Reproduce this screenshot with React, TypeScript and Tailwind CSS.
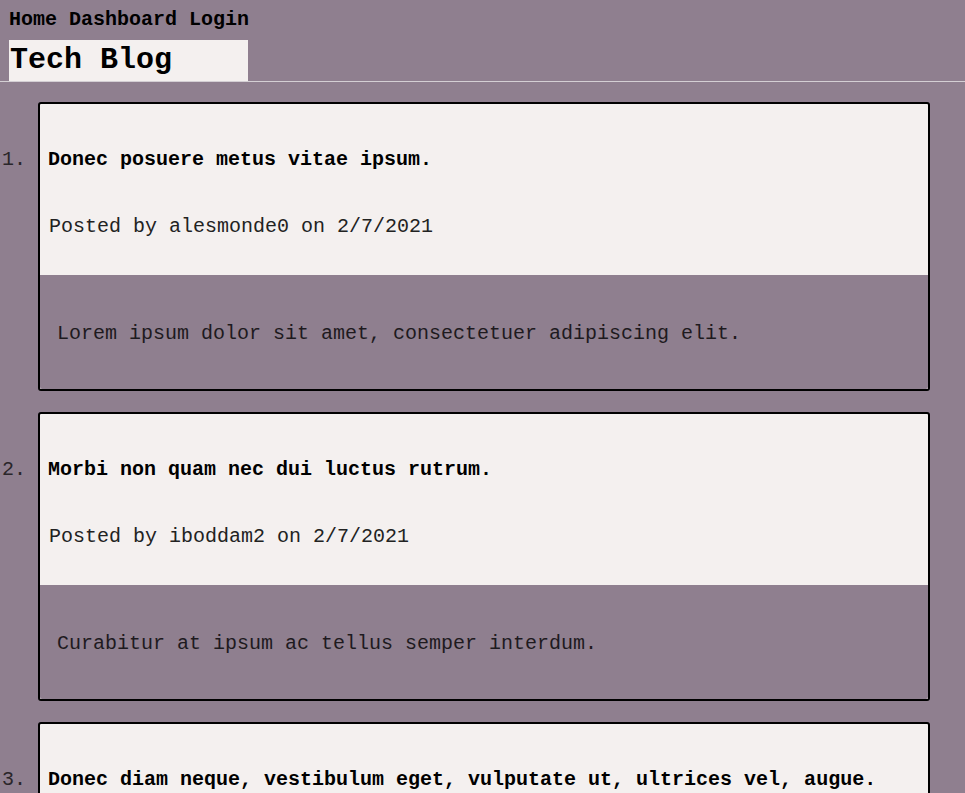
import React from 'react';

const posts = [
  {
    title: "Donec posuere metus vitae ipsum.",
    author: "alesmonde0",
    date: "2/7/2021",
    body: "Lorem ipsum dolor sit amet, consectetuer adipiscing elit."
  },
  {
    title: "Morbi non quam nec dui luctus rutrum.",
    author: "iboddam2",
    date: "2/7/2021",
    body: "Curabitur at ipsum ac tellus semper interdum."
  },
  {
    title: "Donec diam neque, vestibulum eget, vulputate ut, ultrices vel, augue.",
    author: "alesmonde0",
    date: "2/7/2021",
    body: "Nullam porttitor lacus at turpis."
  }
];

const App: React.FC = () => {
  return (
    <div className="min-h-screen bg-[#8f7f8f] font-['Liberation_Mono','Courier_New',monospace] text-[#111]">
      {/* Header */}
      <header className="border-b border-[#d4cfd4] pt-2">
        <nav className="px-[9px] text-[20px] leading-[23px] font-bold text-black">
          <a href="#">Home</a> <a href="#">Dashboard</a> <a href="#">Login</a>
        </nav>
        <div className="mt-[9px] ml-[9px] w-[239px] h-[41px] bg-[#f4f0ef]">
          <h1 className="px-[1px] pt-[1px] text-[30px] leading-[39px] font-bold text-black">Tech Blog</h1>
        </div>
      </header>

      {/* Posts */}
      <ol className="list-decimal list-outside pl-[38px] pr-[35px] pt-5 text-[20px] text-[#333] marker:text-[#2a262a]">
        {posts.map((post, index) => (
          <li key={index} className="mb-[21px] border-2 border-black rounded-[3px] bg-[#f4f0ef]">
            <div className="pt-[44px] pb-[37px] rounded-t-[2px]">
              <h2 className="pl-2 text-[20px] leading-[23px] font-bold text-black">{post.title}</h2>
              <p className="mt-[44px] pl-[9px] text-[20px] leading-[23px] text-[#222]">
                Posted by {post.author} on {post.date}
              </p>
            </div>
            <div className="bg-[#8f7f8f] pt-[47px] pb-[44px] pl-[17px] rounded-b-[2px]">
              <p className="text-[20px] leading-[23px] text-[#1e1a1e]">{post.body}</p>
            </div>
          </li>
        ))}
      </ol>
    </div>
  );
};

export default App;
